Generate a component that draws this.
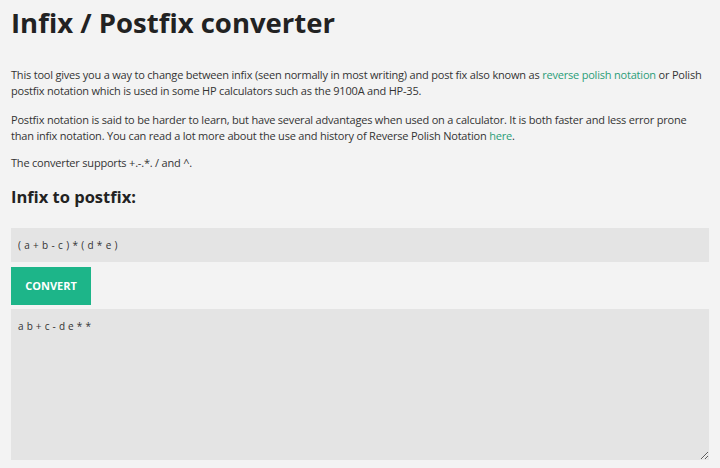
const font = { fontFamily: '"Open Sans", sans-serif' };

export default function App() {
  return (
    <div className="min-h-[468px] w-[720px] bg-[#f3f3f3] px-[11px] text-[#333]" style={font}>
      <h1 className="pt-[3px] text-[27.5px] font-bold leading-[40px] text-[#222]">Infix / Postfix converter</h1>

      <div className="mt-[24px] text-[11px] leading-[16px] tracking-[-0.2px]">
        <p>
          This tool gives you a way to change between infix (seen normally in most writing) and post fix also known as{' '}
          <a href="#" className="text-[#2a9d78]">reverse polish notation</a> or Polish postfix notation which is used in
          some HP calculators such as the 9100A and HP-35.
        </p>
        <p className="mt-[13px]">
          Postfix notation is said to be harder to learn, but have several advantages when used on a calculator. It is
          both faster and less error prone than infix notation. You can read a lot more about the use and history of
          Reverse Polish Notation <a href="#" className="text-[#2a9d78]">here</a>.
        </p>
        <p className="mt-[11px]">The converter supports +.-.*. / and ^.</p>
      </div>

      <h2 className="mt-[14px] text-[16.5px] font-bold leading-[24px] text-[#222]">Infix to postfix:</h2>

      <input
        className="mt-[19px] block h-[34px] w-[698px] bg-[#e4e4e4] px-[7px] text-[10px] tracking-[0.35px] text-[#333] outline-none"
        style={font}
        defaultValue="( a + b - c ) * ( d * e )"
      />
      <button className="mt-[5px] block h-[38px] w-[80px] bg-[#1db589] text-[11px] font-bold text-white" style={font}>
        CONVERT
      </button>
      <textarea
        className="mt-[4px] block h-[151px] w-[698px] resize-y bg-[#e4e4e4] px-[7px] py-[10px] text-[10px] tracking-[0.25px] text-[#333] outline-none"
        style={font}
        defaultValue="a b + c - d e * *"
      />
    </div>
  );
}
